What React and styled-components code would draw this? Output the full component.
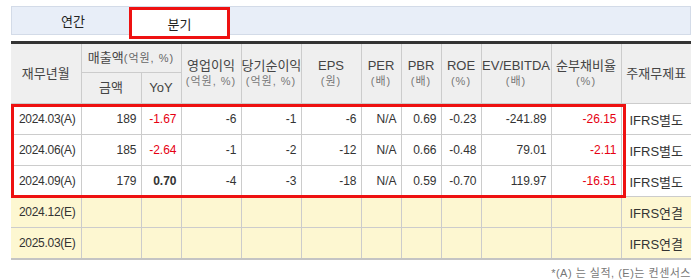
import React from "react";
import styled, { createGlobalStyle } from "styled-components";

const GlobalStyle = createGlobalStyle`
  html, body {
    margin: 0;
    padding: 0;
    background: #ffffff;
  }
  body {
    font-family: "Liberation Sans", "Noto Sans CJK KR", sans-serif;
    font-size: 12px;
    color: #333;
  }
`;

const Wrap = styled.div`
  position: relative;
  width: 680px;
  padding: 6px 0 0 11px;
`;

const TabBar = styled.div`
  display: flex;
  align-items: flex-start;
  height: 29px;
  box-sizing: border-box;
  background: #e8eef8;
  border: 1px solid #d3dbe8;
`;

const Tab = styled.div`
  box-sizing: border-box;
  display: flex;
  align-items: center;
  justify-content: center;
  width: ${(p) => p.$w}px;
  height: 27px;
  padding-left: ${(p) => (p.$active ? 0 : 5)}px;
  font-size: 13px;
  color: #222;
  ${(p) =>
    p.$active &&
    `
    height: 32px;
    background: #fff;
    border: 3px solid #ee1111;
    z-index: 2;
  `}
`;

const Table = styled.table`
  margin-top: 6px;
  width: 680px;
  table-layout: fixed;
  border-collapse: collapse;
  border-top: 3px solid #333;
  border-bottom: 2px solid #c4c4c4;
`;

const Th = styled.th`
  background: #efefef;
  font-weight: normal;
  color: #444;
  font-size: 13px;
  line-height: 16px;
  height: ${(p) => p.$h || 27}px;
  padding: 0;
  text-align: center;
  border: 1px solid #cccccc;
  white-space: nowrap;
  &:first-child {
    border-left: none;
  }
  &:last-child {
    border-right: none;
  }
`;

const Unit = styled.span`
  color: #666;
  font-size: 11px;
  letter-spacing: 1px;
`;

const SubUnit = styled.div`
  color: #777;
  font-size: 11px;
  line-height: 15px;
  letter-spacing: 1px;
`;

const Tr = styled.tr`
  background: ${(p) => (p.$estimate ? "#fdf7d1" : "#ffffff")};
`;

const Td = styled.td`
  height: 30px;
  padding: 0 4px 0 0;
  text-align: right;
  border: 1px solid #cccccc;
  color: ${(p) => (p.$red ? "#e60012" : "#333")};
  font-weight: ${(p) => (p.$bold ? "bold" : "normal")};
  white-space: nowrap;
  &:first-child {
    border-left: none;
  }
  &:last-child {
    border-right: none;
  }
`;

const DateTd = styled(Td)`
  text-align: left;
  padding: 0 0 0 8px;
  letter-spacing: -0.3px;
`;

const TypeTd = styled(Td)`
  text-align: center;
  padding: 0;
  font-size: 13px;
`;

const Highlight = styled.div`
  position: absolute;
  left: 11px;
  top: 104px;
  width: 615px;
  height: 94px;
  box-sizing: border-box;
  border: 3px solid #ee1111;
  pointer-events: none;
`;

const Note = styled.div`
  margin-top: 4px;
  text-align: right;
  font-size: 11px;
  color: #777;
  letter-spacing: 0.5px;
`;

const widths = [70, 60, 40, 60, 60, 60, 40, 40, 40, 70, 70, 70];

const rows = [
  { date: "2024.03(A)", v: ["189", "-1.67", "-6", "-1", "-6", "N/A", "0.69", "-0.23", "-241.89", "-26.15"], type: "IFRS별도" },
  { date: "2024.06(A)", v: ["185", "-2.64", "-1", "-2", "-12", "N/A", "0.66", "-0.48", "79.01", "-2.11"], type: "IFRS별도" },
  { date: "2024.09(A)", v: ["179", "0.70", "-4", "-3", "-18", "N/A", "0.59", "-0.70", "119.97", "-16.51"], type: "IFRS별도" },
  { date: "2024.12(E)", v: Array(10).fill(""), type: "IFRS연결", est: true },
  { date: "2025.03(E)", v: Array(10).fill(""), type: "IFRS연결", est: true },
];

// red: YoY 와 순부채비율 음수
const isRed = (i, val) => (i === 1 || i === 9) && val.startsWith("-");

export default function App() {
  return (
    <>
      <GlobalStyle />
      <Wrap>
        <TabBar>
          <Tab $w={117}>연간</Tab>
          <Tab $w={101} $active>
            분기
          </Tab>
        </TabBar>
        <Table>
          <colgroup>
            {widths.map((w, i) => (
              <col key={i} style={{ width: w }} />
            ))}
          </colgroup>
          <thead>
            <tr>
              <Th rowSpan={2}>재무년월</Th>
              <Th colSpan={2} $h={28}>
                매출액<Unit>(억원, %)</Unit>
              </Th>
              <Th rowSpan={2}>
                영업이익<SubUnit>(억원, %)</SubUnit>
              </Th>
              <Th rowSpan={2}>
                당기순이익<SubUnit>(억원, %)</SubUnit>
              </Th>
              <Th rowSpan={2}>
                EPS<SubUnit>(원)</SubUnit>
              </Th>
              <Th rowSpan={2}>
                PER<SubUnit>(배)</SubUnit>
              </Th>
              <Th rowSpan={2}>
                PBR<SubUnit>(배)</SubUnit>
              </Th>
              <Th rowSpan={2}>
                ROE<SubUnit>(%)</SubUnit>
              </Th>
              <Th rowSpan={2}>
                EV/EBITDA<SubUnit>(배)</SubUnit>
              </Th>
              <Th rowSpan={2}>
                순부채비율<SubUnit>(%)</SubUnit>
              </Th>
              <Th rowSpan={2}>주재무제표</Th>
            </tr>
            <tr>
              <Th $h={30}>금액</Th>
              <Th $h={30}>YoY</Th>
            </tr>
          </thead>
          <tbody>
            {rows.map((r) => (
              <Tr key={r.date} $estimate={r.est}>
                <DateTd>{r.date}</DateTd>
                {r.v.map((val, i) => (
                  <Td key={i} $red={isRed(i, val)} $bold={i === 1 && val === "0.70"}>
                    {val}
                  </Td>
                ))}
                <TypeTd>{r.type}</TypeTd>
              </Tr>
            ))}
          </tbody>
        </Table>
        <Note>*(A) 는 실적, (E)는 컨센서스</Note>
        <Highlight />
      </Wrap>
    </>
  );
}
